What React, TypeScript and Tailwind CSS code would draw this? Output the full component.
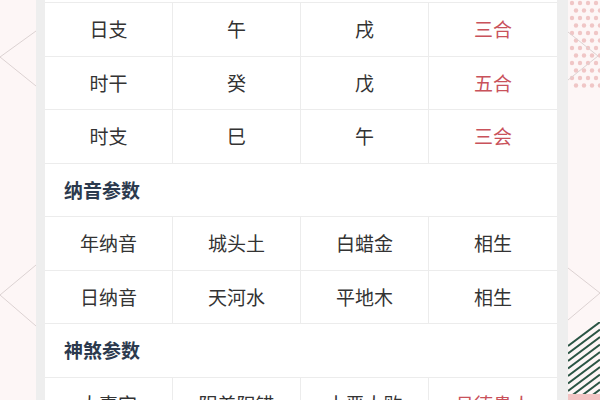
import React from "react";

type Cell = { text: string; red?: boolean };

const topRows: Cell[][] = [
  [{ text: "日支" }, { text: "午" }, { text: "戌" }, { text: "三合", red: true }],
  [{ text: "时干" }, { text: "癸" }, { text: "戊" }, { text: "五合", red: true }],
  [{ text: "时支" }, { text: "巳" }, { text: "午" }, { text: "三会", red: true }],
];

const nayinRows: Cell[][] = [
  [{ text: "年纳音" }, { text: "城头土" }, { text: "白蜡金" }, { text: "相生" }],
  [{ text: "日纳音" }, { text: "天河水" }, { text: "平地木" }, { text: "相生" }],
];

const shenshaRows: Cell[][] = [
  [{ text: "大喜宫" }, { text: "阴差阳错" }, { text: "十恶大败" }, { text: "月德贵人", red: true }],
];

function Row({ cells }: { cells: Cell[] }) {
  return (
    <div className="flex h-[53.5px] shrink-0 border-b border-[#ececec]">
      {cells.map((c, i) => (
        <div
          key={i}
          className={`flex w-[128px] items-center justify-center ${
            i < 3 ? "border-r border-[#ececec]" : ""
          } ${c.red ? "text-[#c9525b]" : "text-[#333333]"}`}
        >
          {c.text}
        </div>
      ))}
    </div>
  );
}

function Section({ title }: { title: string }) {
  return (
    <div className="flex h-[53.5px] shrink-0 items-center border-b border-[#ececec] pl-[19px] font-semibold text-[#2c3a4e]">
      {title}
    </div>
  );
}

function LeftDeco() {
  return (
    <svg width="36" height="400" className="block">
      <polyline points="36,31 0,57 36,86" fill="none" stroke="#dcd2d2" strokeWidth="1" />
      <polyline points="36,265 0,295 36,326" fill="none" stroke="#dcd2d2" strokeWidth="1" />
    </svg>
  );
}

function RightDeco() {
  const dots: React.ReactNode[] = [];
  for (let r = 0; r < 12; r++) {
    for (let c = 0; c < 5; c++) {
      const x = 4 + c * 8 + (r % 2 ? 4 : 0);
      const y = 3 + r * 7.5;
      dots.push(<circle key={`${r}-${c}`} cx={x} cy={y} r="2.2" fill="#f0c6c6" />);
    }
  }
  const stripes: React.ReactNode[] = [];
  for (let i = 0; i < 14; i++) {
    const y0 = 346 + i * 7.5;
    stripes.push(
      <line key={i} x1="0" y1={y0} x2="32" y2={y0 - 24} stroke="#2b5545" strokeWidth="2" />
    );
  }
  return (
    <svg width="32" height="400" className="block">
      {dots}
      <polyline points="0,32 30,56 0,80" fill="none" stroke="#dcd2d2" strokeWidth="1" />
      <polyline points="0,268 32,293 0,320" fill="none" stroke="#dcd2d2" strokeWidth="1" />
      <clipPath id="stripeClip">
        <rect x="0" y="322" width="32" height="72" />
      </clipPath>
      <g clipPath="url(#stripeClip)">{stripes}</g>
      <rect x="0" y="394" width="32" height="6" fill="#f3c4c4" />
    </svg>
  );
}

export default function App() {
  return (
    <div
      className="flex h-[400px] w-[600px] overflow-hidden bg-[#fdf6f6] text-[19px]"
      style={{ fontFamily: '"Noto Sans CJK SC", "Noto Sans", sans-serif' }}
    >
      <div className="w-[36px] shrink-0">
        <LeftDeco />
      </div>
      <div className="w-[9px] shrink-0 bg-[#eeeeee]" />
      <div className="flex w-[512px] shrink-0 flex-col bg-white">
        <div className="h-[3px] shrink-0 border-b border-[#ececec]" />
        {topRows.map((r, i) => (
          <Row key={i} cells={r} />
        ))}
        <Section title="纳音参数" />
        {nayinRows.map((r, i) => (
          <Row key={i} cells={r} />
        ))}
        <Section title="神煞参数" />
        {shenshaRows.map((r, i) => (
          <Row key={i} cells={r} />
        ))}
      </div>
      <div className="w-[11px] shrink-0 bg-[#eeeeee]" />
      <div className="w-[32px] shrink-0">
        <RightDeco />
      </div>
    </div>
  );
}
